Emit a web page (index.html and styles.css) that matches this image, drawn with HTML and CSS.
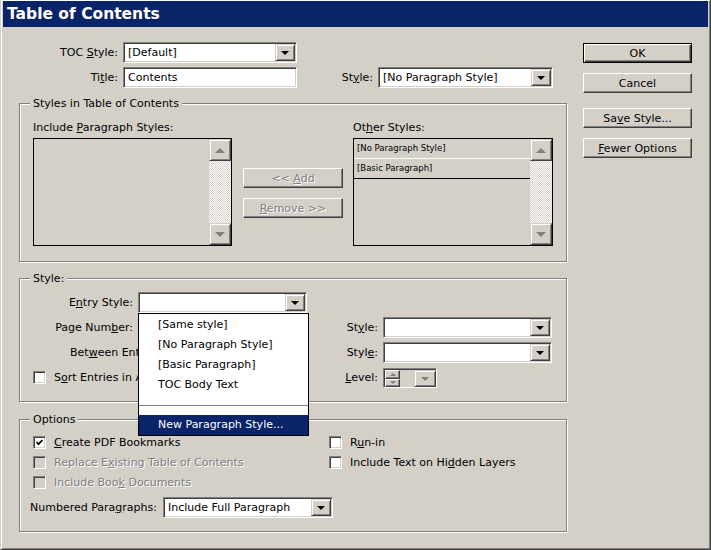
FILE: index.html
```html
<!DOCTYPE html>
<html>
<head>
<meta charset="utf-8">
<title>Table of Contents</title>
<link rel="stylesheet" href="styles.css">
</head>
<body>
<div class="window">
  <div class="titlebar">Table of Contents</div>
  <div class="client">
    <div class="main">
      <div class="toprows">
        <div class="lbl r c1">TOC <u>S</u>tyle:</div>
        <div class="combo c2"><span class="val">[Default]</span><span class="arrow"><i class="tri"></i></span></div>
        <div class="lbl r c1">Ti<u>t</u>le:</div>
        <div class="field c2"><span class="val">Contents</span></div>
        <div class="lbl r c3">St<u>y</u>le:</div>
        <div class="combo c4"><span class="val">[No Paragraph Style]</span><span class="arrow"><i class="tri"></i></span></div>
      </div>

      <section class="group g1">
        <div class="legend">Styles in Table of Contents</div>
        <div class="g1-body">
          <div class="listcol">
            <div class="lbl top">Include <u>P</u>aragraph Styles:</div>
            <div class="listbox">
              <div class="items"></div>
              <div class="scrollbar">
                <div class="sbtn raised"><i class="stri up"></i></div>
                <div class="track"></div>
                <div class="sbtn raised"><i class="stri down"></i></div>
              </div>
            </div>
          </div>
          <div class="midcol">
            <button class="btn disabled">&lt;&lt; <u>A</u>dd</button>
            <button class="btn disabled"><u>R</u>emove &gt;&gt;</button>
          </div>
          <div class="listcol rightcol">
            <div class="lbl top">Ot<u>h</u>er Styles:</div>
            <div class="listbox">
              <div class="items">
                <div class="item a">[No Paragraph Style]</div>
                <div class="item b">[Basic Paragraph]</div>
              </div>
              <div class="scrollbar">
                <div class="sbtn raised"><i class="stri up"></i></div>
                <div class="track"></div>
                <div class="sbtn raised"><i class="stri down"></i></div>
              </div>
            </div>
          </div>
        </div>
      </section>

      <section class="group g2">
        <div class="legend">Style:</div>
        <div class="g2-body">
          <div class="lbl r">E<u>n</u>try Style:</div>
          <div class="anchor">
            <div class="combo"><span class="val"></span><span class="arrow"><i class="tri"></i></span></div>
            <div class="popup">
              <div class="pi">[Same style]</div>
              <div class="pi">[No Paragraph Style]</div>
              <div class="pi">[Basic Paragraph]</div>
              <div class="pi">TOC Body Text</div>
              <div class="sep"></div>
              <div class="pi sel">New Paragraph Style...</div>
            </div>
          </div>
          <div></div>
          <div></div>

          <div class="lbl r">Page Num<u>b</u>er:</div>
          <div class="combo"><span class="val"></span><span class="arrow"><i class="tri"></i></span></div>
          <div class="lbl r">St<u>y</u>le:</div>
          <div class="combo"><span class="val"></span><span class="arrow"><i class="tri"></i></span></div>

          <div class="lbl between">Bet<u>w</u>een Entry and Number:</div>
          <div class="field"><span class="val"></span></div>
          <div class="lbl r">Styl<u>e</u>:</div>
          <div class="combo"><span class="val"></span><span class="arrow"><i class="tri"></i></span></div>

          <div class="check sortrow"><span class="cb"></span><span>S<u>o</u>rt Entries in Alphabetical Order</span></div>
          <div></div>
          <div class="lbl r"><u>L</u>evel:</div>
          <div class="levelcell">
            <div class="level">
              <div class="spin">
                <div class="raised"><i class="mtri up"></i></div>
                <div class="raised"><i class="mtri down"></i></div>
              </div>
              <div class="larrow raised"><i class="stri down small"></i></div>
            </div>
          </div>
        </div>
      </section>

      <section class="group g3">
        <div class="legend">Options</div>
        <div class="g3-body">
          <div class="checkgrid">
            <div class="check"><span class="cb"><svg width="9" height="9" viewBox="0 0 9 9"><polyline points="1.5,4 3.5,6.2 7.5,2" fill="none" stroke="#000" stroke-width="1.7"/></svg></span><span><u>C</u>reate PDF Bookmarks</span></div>
            <div class="check"><span class="cb"></span><span>R<u>u</u>n-in</span></div>
            <div class="check disabled"><span class="cb off"></span><span>Replace E<u>x</u>isting Table of Contents</span></div>
            <div class="check"><span class="cb"></span><span>Include Text on Hi<u>d</u>den Layers</span></div>
            <div class="check disabled"><span class="cb off"></span><span>Include Boo<u>k</u> Documents</span></div>
            <div></div>
          </div>
          <div class="numrow">
            <div class="lbl">Numbered Para<u>g</u>raphs:</div>
            <div class="combo"><span class="val">Include Full Paragraph</span><span class="arrow"><i class="tri"></i></span></div>
          </div>
        </div>
      </section>
    </div>

    <div class="side">
      <button class="btn default">OK</button>
      <button class="btn cancel">Cancel</button>
      <button class="btn save">Sa<u>v</u>e Style...</button>
      <button class="btn fewer"><u>F</u>ewer Options</button>
    </div>
  </div>
</div>
</body>
</html>
```

FILE: styles.css
```css
* { box-sizing: border-box; }
html, body { margin: 0; padding: 0; }
body {
  width: 711px;
  height: 550px;
  overflow: hidden;
  background: #d4d0c8;
  font-family: "DejaVu Sans", "Liberation Sans", sans-serif;
  font-size: 11px;
  color: #000;
}
u { text-decoration: underline; text-underline-offset: 1px; }

.window {
  width: 711px;
  height: 550px;
  background: #d4d0c8;
  border: 1px solid;
  border-top-width: 0;
  border-color: #d4d0c8 #404040 #404040 #d4d0c8;
  box-shadow: inset 1px 1px 0 #fff, inset -1px -1px 0 #808080;
  padding: 1px 2px 2px 2px;
  display: flex;
  flex-direction: column;
}
.titlebar {
  height: 26px;
  background: #0a246a;
  color: #fff;
  font-weight: bold;
  font-size: 15.5px;
  line-height: 26px;
  padding-left: 4px;
  flex: none;
}
.client { display: flex; flex: 1; }
.main { width: 564px; padding: 15px 0 0 16px; flex: none; }
.side {
  width: 109px;
  margin-left: 16px;
  padding-top: 16px;
  display: flex;
  flex-direction: column;
  flex: none;
}

/* generic */
.lbl { white-space: nowrap; line-height: 14px; }
.lbl.r { text-align: right; }
.raised {
  background: #d4d0c8;
  border: 1px solid;
  border-color: #fff #404040 #404040 #fff;
  box-shadow: inset -1px -1px 0 #808080;
}
.combo, .field {
  height: 21px;
  background: #fff;
  border: 1px solid;
  border-color: #808080 #fff #fff #808080;
  box-shadow: inset 1px 1px 0 #404040, inset -1px -1px 0 #d4d0c8;
  padding: 1px;
  display: flex;
  align-items: stretch;
}
.combo .val, .field .val {
  flex: 1;
  padding-left: 3px;
  line-height: 17px;
  white-space: nowrap;
  overflow: hidden;
}
.combo .arrow {
  width: 20px;
  flex: none;
  background: #d4d0c8;
  border: 1px solid;
  border-color: #d4d0c8 #404040 #404040 #d4d0c8;
  box-shadow: inset 1px 1px 0 #fff, inset -1px -1px 0 #808080;
  display: flex;
  align-items: center;
  justify-content: center;
}
.tri {
  display: block;
  width: 0; height: 0;
  border-left: 4px solid transparent;
  border-right: 4px solid transparent;
  border-top: 4px solid #000;
  margin-top: 1px;
}

.btn {
  appearance: none;
  font-family: inherit;
  font-size: 11px;
  color: #000;
  height: 20px;
  padding: 0;
  margin: 0;
  text-align: center;
  line-height: 17px;
  background: #d4d0c8;
  border: 1px solid;
  border-color: #fff #404040 #404040 #fff;
  box-shadow: inset -1px -1px 0 #808080;
  border-radius: 0;
}
.btn.disabled, .check.disabled { color: #808080; text-shadow: 1px 1px 0 #fff; }
.btn.default {
  border: 1px solid #000;
  box-shadow: inset 1px 1px 0 #fff, inset -1px -1px 0 #404040, inset -2px -2px 0 #808080;
}
.side .cancel { margin-top: 10px; }
.side .save { margin-top: 15px; }
.side .fewer { margin-top: 10px; }

/* top rows */
.toprows {
  display: grid;
  grid-template-columns: 99px 174px 71px 175px;
  grid-template-rows: 21px 21px;
  gap: 4px 5px;
  align-items: center;
}
.toprows .c1 { grid-column: 1; }
.toprows .c2 { grid-column: 2; }
.toprows .c3 { grid-column: 3; grid-row: 2; }
.toprows .c4 { grid-column: 4; grid-row: 2; }

/* group boxes */
.group {
  width: 548px;
  border: 1px solid #808080;
  box-shadow: 1px 1px 0 #fff, inset 1px 1px 0 #fff;
}
.legend {
  width: max-content;
  margin: -7px 0 0 10px;
  padding: 0 3px;
  height: 13px;
  line-height: 13px;
  background: #d4d0c8;
}
.g1 { margin-top: 15px; }
.g2 { margin-top: 16px; }
.g3 { margin-top: 17px; }

/* group 1 */
.g1-body {
  display: flex;
  align-items: flex-start;
  padding: 11px 0 15px 13px;
}
.listcol { width: 199px; flex: none; }
.listcol.rightcol { width: 200px; margin-left: 10px; }
.lbl.top { height: 14px; margin-bottom: 3px; }
.listbox {
  height: 108px;
  border: 1px solid #000;
  background: #d4d0c8;
  display: flex;
}
.items { flex: 1; }
.item {
  height: 20px;
  line-height: 19px;
  padding-left: 3px;
  font-size: 8.5px;
  white-space: nowrap;
}
.item.a { border-bottom: 1px solid #fff; }
.item.b { border-bottom: 1px solid #000; }
.scrollbar { width: 22px; flex: none; display: flex; flex-direction: column; }
.sbtn {
  height: 22px;
  flex: none;
  display: flex;
  align-items: center;
  justify-content: center;
  border-color: #d4d0c8 #404040 #404040 #d4d0c8;
  box-shadow: inset 1px 1px 0 #fff, inset -1px -1px 0 #808080;
}
.track {
  flex: 1;
  background: repeating-conic-gradient(#fff 0 25%, #d4d0c8 0 50%) 0 0 / 2px 2px;
}
.stri {
  display: block;
  width: 0; height: 0;
  border-left: 5px solid transparent;
  border-right: 5px solid transparent;
}
.stri.up { border-bottom: 5px solid #808080; }
.stri.down { border-top: 5px solid #808080; }
.stri.small { border-left-width: 4px; border-right-width: 4px; border-top-width: 4px; }
.midcol {
  width: 100px;
  flex: none;
  margin-left: 11px;
  padding-top: 47px;
  display: flex;
  flex-direction: column;
  gap: 10px;
}

/* group 2 */
.g2-body {
  display: grid;
  grid-template-columns: 113px 169px 66px 169px;
  grid-template-rows: 21px 21px 21px 21px;
  gap: 4px 5px;
  align-items: center;
  padding: 7px 0 13px 0;
}
.anchor { position: relative; height: 21px; }
.popup {
  position: absolute;
  top: 21px;
  left: 0;
  width: 171px;
  background: #fff;
  border: 1px solid #000;
  padding-top: 1px;
  z-index: 5;
}
.pi {
  height: 20px;
  line-height: 20px;
  padding-left: 19px;
  white-space: nowrap;
}
.pi.sel { background: #0a246a; color: #fff; }
.sep { height: 20px; display: flex; align-items: center; }
.sep::before { content: ""; flex: 1; border-top: 1px solid #808080; }
.lbl.between {
  width: 118px;
  padding-left: 50px;
  overflow: hidden;
}
.check {
  display: flex;
  align-items: center;
  white-space: nowrap;
  height: 20px;
}
.sortrow { padding-left: 13px; width: 118px; overflow: hidden; }
.cb {
  width: 13px;
  height: 13px;
  flex: none;
  margin-right: 8px;
  background: #fff;
  border: 1px solid;
  border-color: #808080 #fff #fff #808080;
  box-shadow: inset 1px 1px 0 #404040, inset -1px -1px 0 #d4d0c8;
  display: flex;
  align-items: center;
  justify-content: center;
}
.cb.off { background: #d4d0c8; }
.levelcell { align-self: end; height: 21px; display: flex; align-items: flex-end; }
.level {
  width: 54px;
  height: 20px;
  background: #d4d0c8;
  border: 1px solid;
  border-color: #808080 #fff #fff #808080;
  box-shadow: inset 1px 1px 0 #404040;
  padding: 1px 0 0 1px;
  display: flex;
  justify-content: space-between;
}
.spin { width: 15px; display: flex; flex-direction: column; }
.spin > div { flex: 1; display: flex; align-items: center; justify-content: center; }
.mtri {
  display: block;
  width: 0; height: 0;
  border-left: 3px solid transparent;
  border-right: 3px solid transparent;
}
.mtri.up { border-bottom: 3px solid #808080; }
.mtri.down { border-top: 3px solid #808080; }
.larrow {
  width: 22px;
  display: flex;
  align-items: center;
  justify-content: center;
  border-color: #d4d0c8 #404040 #404040 #d4d0c8;
  box-shadow: inset 1px 1px 0 #fff, inset -1px -1px 0 #808080;
}

/* group 3 */
.g3-body { padding: 6px 0 13px 10px; }
.checkgrid {
  display: grid;
  grid-template-columns: 296px auto;
  grid-auto-rows: 20px;
  margin-left: 3px;
}
.numrow {
  margin-top: 5px;
  display: grid;
  grid-template-columns: 128px 170px;
  column-gap: 5px;
  align-items: center;
  height: 21px;
}
```
